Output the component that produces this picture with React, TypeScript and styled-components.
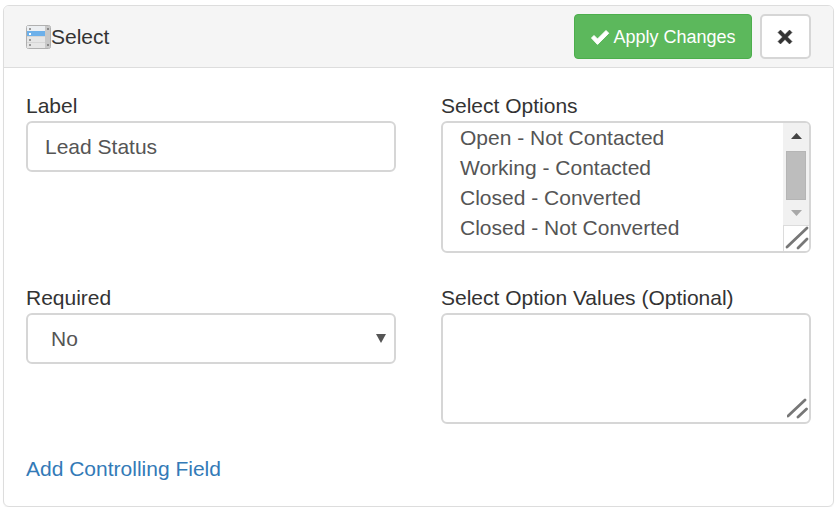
import React from "react";
import styled, { createGlobalStyle } from "styled-components";

const Global = createGlobalStyle`
  html, body { margin: 0; padding: 0; background: #fff; }
  body { font-family: "Liberation Sans", Arial, sans-serif; color: #333; }
  * { box-sizing: border-box; }
`;

const Panel = styled.div`
  width: 831px;
  height: 502px;
  margin: 5px 0 0 3px;
  border: 1px solid #ddd;
  border-radius: 6px;
  box-shadow: 0 1px 1px rgba(0, 0, 0, 0.05);
  overflow: hidden;
`;

const Header = styled.header`
  height: 62px;
  display: flex;
  align-items: center;
  padding: 0 22px;
  background: #f5f5f5;
  border-bottom: 1px solid #ddd;
`;

const Title = styled.div`
  flex: 1;
  display: flex;
  align-items: center;
  font-size: 21px;
  line-height: 28px;
  color: #333;
`;

const Actions = styled.div`
  display: flex;
  gap: 8px;
`;

const ApplyButton = styled.button`
  width: 178px;
  height: 45px;
  display: flex;
  align-items: center;
  justify-content: center;
  gap: 3px;
  padding: 1px 0 0 0;
  background: #5cb85c;
  border: 1px solid #4cae4c;
  border-radius: 4px;
  color: #fff;
  font: 18px "Liberation Sans", Arial, sans-serif;
`;

const CloseButton = styled.button`
  width: 51px;
  height: 45px;
  display: flex;
  align-items: center;
  justify-content: center;
  padding: 0 2px 0 0;
  background: #fff;
  border: 2px solid #d6d6d6;
  border-radius: 5px;
`;

const Body = styled.div`
  padding: 23px 22px 0;
`;

const Grid = styled.div`
  display: grid;
  grid-template-columns: 370px 370px;
  column-gap: 45px;
  grid-template-rows: 192px 172px;
`;

const Field = styled.div`
  display: flex;
  flex-direction: column;
`;

const FieldLabel = styled.label`
  flex: none;
  font-size: 21px;
  line-height: 30px;
  height: 30px;
  color: #333;
`;

const controlBase = `
  display: block;
  width: 100%;
  border: 2px solid #d6d6d6;
  border-radius: 6px;
  background: #fff;
  color: #555;
  font: 21px "Liberation Sans", Arial, sans-serif;
  outline: none;
`;

const TextInput = styled.input`
  ${controlBase}
  flex: none;
  height: 51px;
  padding: 0 17px;
`;

const SelectWrap = styled.div`
  position: relative;
  flex: none;
`;

const SelectBox = styled.select`
  ${controlBase}
  height: 51px;
  padding: 0 18px 0 23px;
  appearance: none;
`;

const Caret = styled.svg`
  position: absolute;
  right: 10px;
  top: 20px;
  width: 10px;
  height: 10px;
`;

const AreaWrap = styled.div<{ $height: number }>`
  position: relative;
  flex: none;
  height: ${(p) => p.$height}px;
`;

const Area = styled.textarea`
  ${controlBase}
  height: 100%;
  padding: 0 17px;
  line-height: 30px;
  resize: none;
  overflow: hidden;
`;

const Scrollbar = styled.div`
  position: absolute;
  right: 2px;
  top: 2px;
  bottom: 2px;
  width: 26px;
  background: #f1f1f1;
  border-top-right-radius: 4px;
  border-bottom-right-radius: 4px;
  display: flex;
  flex-direction: column;
  align-items: center;
`;

const ArrowUp = styled.svg`
  flex: none;
  width: 11px;
  height: 6px;
  margin-top: 10px;
`;

const Thumb = styled.div`
  flex: none;
  width: 20px;
  height: 49px;
  margin-top: 12px;
  background: #bdbdbd;
  border: 1px solid #b5b5b5;
`;

const ArrowDown = styled.svg`
  flex: none;
  width: 11px;
  height: 6px;
  margin-top: 10px;
`;

const GripCell = styled.div`
  position: absolute;
  right: 2px;
  bottom: 2px;
  width: 26px;
  height: 26px;
  background: #fff;
  border-top: 1px solid #dcdcdc;
  border-left: 1px solid #dcdcdc;
  border-bottom-right-radius: 4px;
`;

const GripOver = styled.svg`
  position: absolute;
  right: 3px;
  bottom: 5px;
  width: 21px;
  height: 21px;
`;

const CellGrip = styled.svg`
  display: block;
  width: 25px;
  height: 25px;
`;

const CloseIcon = styled.svg`
  width: 16px;
  height: 16px;
`;

const FooterLink = styled.a`
  display: block;
  font-size: 21px;
  line-height: 28px;
  color: #337ab7;
  text-decoration: none;
`;

const SelectIcon = () => (
  <svg width="25" height="24" viewBox="0 0 25 24">
    <rect x="0.5" y="0.5" width="24" height="23" rx="2" fill="#d6d6d6" stroke="#b0b0b0" />
    <rect x="1" y="1" width="23" height="5" fill="#eceff2" />
    <rect x="1" y="6" width="23" height="5" fill="#6cb0ea" />
    <rect x="1" y="12" width="18" height="5" fill="#e6e6e6" />
    <rect x="1" y="18" width="18" height="5" fill="#e6e6e6" />
    <rect x="19" y="1" width="5" height="22" fill="#c8c8c8" />
    <rect x="3" y="3" width="2" height="2" fill="#999" />
    <rect x="3" y="8" width="2" height="2" fill="#fff" />
    <rect x="3" y="14" width="2" height="2" fill="#999" />
    <rect x="3" y="19" width="2" height="2" fill="#999" />
    <rect x="21" y="3" width="2" height="2" fill="#888" />
    <rect x="21" y="19" width="2" height="2" fill="#888" />
  </svg>
);

export default function App() {
  return (
    <>
      <Global />
      <Panel>
        <Header>
          <Title>
            <SelectIcon />
            Select
          </Title>
          <Actions>
            <ApplyButton>
              <svg width="20" height="17" viewBox="0 0 20 17">
                <path d="M1.5 9 L4 6.5 L7.5 10 L16 1.5 L18.7 4.2 L7.5 15.4 Z" fill="#fff" stroke="#fff" strokeLinejoin="round" />
              </svg>
              Apply Changes
            </ApplyButton>
            <CloseButton aria-label="Close">
              <CloseIcon viewBox="0 0 16 16">
                <path d="M3.5 1 L8 5.5 L12.5 1 L15 3.5 L10.5 8 L15 12.5 L12.5 15 L8 10.5 L3.5 15 L1 12.5 L5.5 8 L1 3.5 Z" fill="#333" stroke="#333" strokeLinejoin="round" strokeWidth="0.5" />
              </CloseIcon>
            </CloseButton>
          </Actions>
        </Header>
        <Body>
          <Grid>
            <Field>
              <FieldLabel>Label</FieldLabel>
              <TextInput defaultValue="Lead Status" />
            </Field>
            <Field>
              <FieldLabel>Select Options</FieldLabel>
              <AreaWrap $height={132}>
                <Area defaultValue={"Open - Not Contacted\nWorking - Contacted\nClosed - Converted\nClosed - Not Converted"} />
                <Scrollbar>
                  <ArrowUp viewBox="0 0 11 6"><path d="M5.5 0 L11 6 H0 Z" fill="#444" /></ArrowUp>
                  <Thumb />
                  <ArrowDown viewBox="0 0 11 6"><path d="M0 0 H11 L5.5 6 Z" fill="#a8a8a8" /></ArrowDown>
                </Scrollbar>
                <GripCell>
                  <CellGrip viewBox="0 0 25 25">
                    <path d="M3 21 L23 2 M14 22 L23 13" stroke="#777" strokeWidth="2.8" strokeLinecap="round" />
                  </CellGrip>
                </GripCell>
              </AreaWrap>
            </Field>
            <Field>
              <FieldLabel>Required</FieldLabel>
              <SelectWrap>
                <SelectBox defaultValue="No">
                  <option>No</option>
                  <option>Yes</option>
                </SelectBox>
                <Caret viewBox="0 0 10 10"><path d="M0 1 H10 L5 10 Z" fill="#555" /></Caret>
              </SelectWrap>
            </Field>
            <Field>
              <FieldLabel>Select Option Values (Optional)</FieldLabel>
              <AreaWrap $height={111}>
                <Area />
                <GripOver viewBox="0 0 21 21">
                  <path d="M1 18 L18 2 M11 19 L19.5 11" stroke="#777" strokeWidth="2.8" strokeLinecap="round" />
                </GripOver>
              </AreaWrap>
            </Field>
          </Grid>
          <FooterLink href="#">Add Controlling Field</FooterLink>
        </Body>
      </Panel>
    </>
  );
}
